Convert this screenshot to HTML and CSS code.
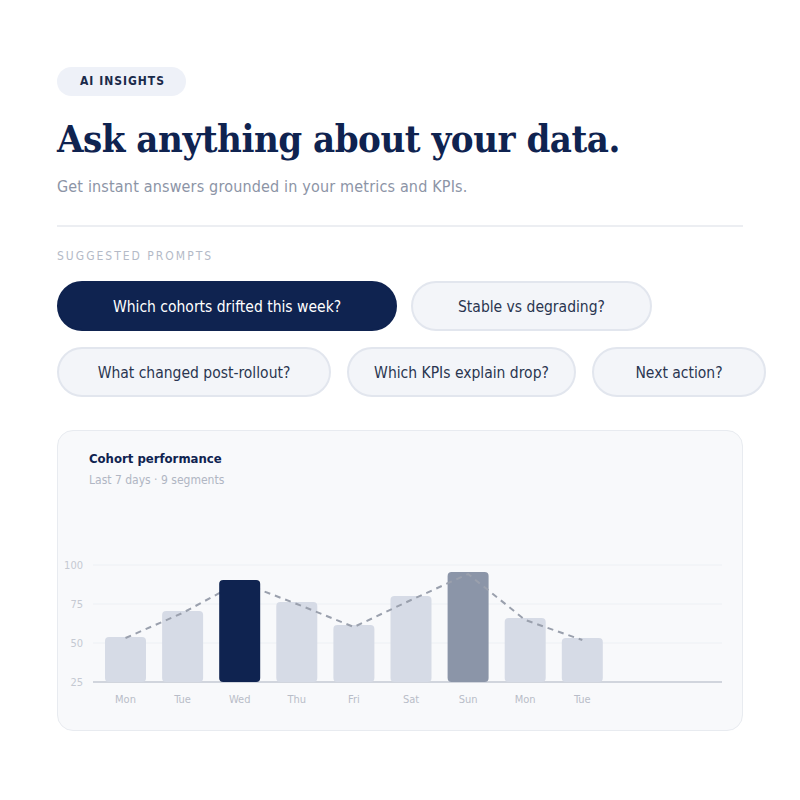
FILE: index.html
```html
<!DOCTYPE html>
<html lang="en">

<head>
    <meta charset="UTF-8">
    <meta name="viewport" content="width=device-width, initial-scale=1.0">
    <title>AI Insights</title>
    <link rel="stylesheet" href="styles.css">
</head>

<body>

    <div class="insights">
        <span class="badge">AI INSIGHTS</span>
        <h1 class="headline">Ask anything about your data.</h1>
        <p class="lead">Get instant answers grounded in your metrics and KPIs.</p>

        <hr class="divider">

        <div class="section-label">SUGGESTED PROMPTS</div>

        <div class="prompts">
            <div class="prompt-row row-one">
                <button class="prompt active">Which cohorts drifted this week?</button>
                <button class="prompt">Stable vs degrading?</button>
            </div>
            <div class="prompt-row row-two">
                <button class="prompt">What changed post-rollout?</button>
                <button class="prompt">Which KPIs explain drop?</button>
                <button class="prompt">Next action?</button>
            </div>
        </div>

        <div class="chart-card">
            <div class="chart-head">
                <h3>Cohort performance</h3>
                <span class="chart-sub">Last 7 days · 9 segments</span>
            </div>

            <svg class="chart" viewBox="0 0 684 215" width="684" height="215">
                <!-- grid -->
                <g class="grid">
                    <line x1="35" y1="65" x2="664" y2="65" />
                    <line x1="35" y1="104" x2="664" y2="104" />
                    <line x1="35" y1="143" x2="664" y2="143" />
                </g>
                <line class="axis" x1="35" y1="182" x2="664" y2="182" />
                <g class="y-labels">
                    <text x="25" y="69">100</text>
                    <text x="25" y="108">75</text>
                    <text x="25" y="147">50</text>
                    <text x="25" y="186">25</text>
                </g>

                <!-- bars -->
                <g class="bars">
                    <rect x="47" y="137" width="41" height="45" rx="4" />
                    <rect x="104.1" y="111" width="41" height="71" rx="4" />
                    <rect x="218.3" y="102" width="41" height="80" rx="4" />
                    <rect x="275.4" y="125" width="41" height="57" rx="4" />
                    <rect x="332.5" y="96" width="41" height="86" rx="4" />
                    <rect class="muted" x="389.6" y="72" width="41" height="110" rx="4" />
                    <rect x="446.7" y="118" width="41" height="64" rx="4" />
                    <rect x="503.8" y="138" width="41" height="44" rx="4" />
                </g>

                <polyline class="trend"
                    points="67.5,138 124.6,113 181.7,82 238.8,104 295.9,127 353,100 410.1,74 467.2,120 524.3,140" />

                <rect class="bar-active" x="161.2" y="80" width="41" height="102" rx="4" />

                <g class="x-labels">
                    <text x="67.5" y="203">Mon</text>
                    <text x="124.6" y="203">Tue</text>
                    <text x="181.7" y="203">Wed</text>
                    <text x="238.8" y="203">Thu</text>
                    <text x="295.9" y="203">Fri</text>
                    <text x="353" y="203">Sat</text>
                    <text x="410.1" y="203">Sun</text>
                    <text x="467.2" y="203">Mon</text>
                    <text x="524.3" y="203">Tue</text>
                </g>
            </svg>
        </div>
    </div>

</body>

</html>
```

FILE: styles.css
```css
body {
    margin: 0;
    background: #fff;
    font-family: "DejaVu Sans", sans-serif;
    font-stretch: condensed;
}

.insights {
    width: 686px;
    margin: 0 auto;
    padding-top: 67px;
}

.badge {
    display: inline-block;
    background: #eef1f8;
    color: #1a2a4a;
    font-size: 12px;
    font-weight: bold;
    letter-spacing: 1px;
    line-height: 29px;
    padding: 0 21px 0 23px;
    border-radius: 15px;
}

.headline {
    font-family: "DejaVu Serif", serif;
    font-stretch: condensed;
    font-size: 38px;
    font-weight: bold;
    color: #0f2350;
    letter-spacing: -0.5px;
    margin: 18px 0 0;
    line-height: 50px;
}

.lead {
    font-size: 16px;
    letter-spacing: 0.17px;
    color: #8c94a6;
    margin: 12px 0 0;
    line-height: 22px;
}

.divider {
    border: 0;
    border-top: 2px solid #eceef2;
    margin: 27px 0 0;
}

.section-label {
    font-size: 12px;
    letter-spacing: 2px;
    color: #b4bac7;
    margin-top: 21px;
    line-height: 16px;
}

.prompts {
    display: flex;
    flex-direction: column;
    gap: 16px;
    margin-top: 17px;
}

.prompt-row {
    display: grid;
    gap: 14px;
}

.row-one {
    grid-template-columns: 340px 241px;
}

.row-two {
    grid-template-columns: 274px 229px 174px;
    gap: 16px;
}

.prompt {
    height: 50px;
    border-radius: 25px;
    border: 2px solid #e2e6ee;
    background: #f3f5f9;
    color: #2a3550;
    font-family: "DejaVu Sans", sans-serif;
    font-stretch: condensed;
    font-size: 15.5px;
    padding: 2px 0 0;
    cursor: pointer;
}

.prompt.active {
    background: #0f2350;
    border-color: #0f2350;
    color: #fff;
}

.chart-card {
    margin-top: 33px;
    background: #f8f9fb;
    border: 1px solid #e8ebf0;
    border-radius: 16px;
    padding: 18px 0 15px;
}

.chart-head {
    padding-left: 31px;
}

.chart-head h3 {
    margin: 0;
    font-size: 13px;
    font-weight: bold;
    color: #0f2350;
    line-height: 20px;
}

.chart-sub {
    display: block;
    margin-top: 3px;
    font-size: 12px;
    color: #b0b6c3;
    line-height: 16px;
}

.chart {
    display: block;
    margin-top: 12px;
}

.grid line {
    stroke: #edf0f4;
    stroke-width: 1;
}

.axis {
    stroke: #d1d5dd;
    stroke-width: 2;
}

.y-labels text {
    font-size: 11px;
    fill: #c5c9d2;
    text-anchor: end;
}

.x-labels text {
    font-size: 11px;
    fill: #b8bdc8;
    text-anchor: middle;
}

.bars rect {
    fill: #d6dbe6;
}

.bars rect.muted {
    fill: #8b95a8;
}

.bar-active {
    fill: #0f2350;
}

.trend {
    fill: none;
    stroke: #9aa0ad;
    stroke-width: 2;
    stroke-dasharray: 6 5;
}
```
